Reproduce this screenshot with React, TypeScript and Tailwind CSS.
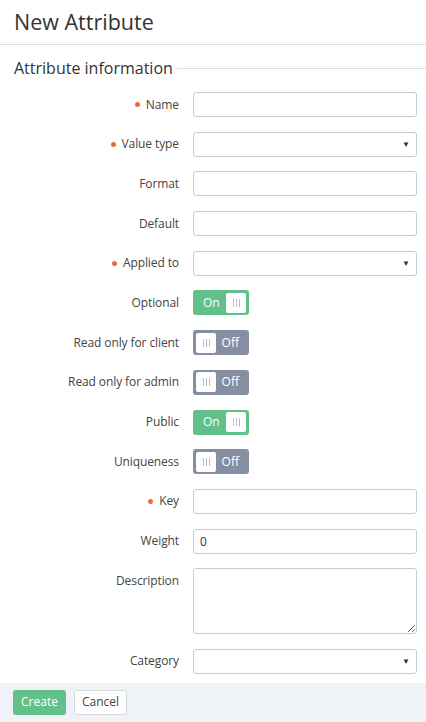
import type { ReactNode } from 'react';

const Dot = () => <span className="mr-[6px] inline-block h-[5px] w-[5px] rounded-full bg-[#f2683a]" />;

const Field = ({ label, required, children, top }: { label: string; required?: boolean; children: ReactNode; top?: boolean }) => (
  <div className={`flex ${top ? 'items-start' : 'items-center'}`}>
    <label className={`flex w-[179px] shrink-0 items-center justify-end text-[12px] tracking-[-0.1px] text-[#444] ${top ? 'pt-[4px]' : ''}`}>
      {required && <Dot />}
      {label}
    </label>
    <div className="ml-[14px] flex-1">{children}</div>
  </div>
);

const Input = ({ value }: { value?: string }) => (
  <input
    readOnly
    value={value ?? ''}
    className="block h-[25px] w-full rounded-[3px] border border-[#c5cad3] bg-white px-[6px] text-[12px] text-[#333] outline-none"
  />
);

const Select = () => (
  <div className="relative h-[25px] w-full rounded-[3px] border border-[#c5cad3] bg-white">
    <span className="absolute right-[6px] top-[7px] text-[8px] leading-none text-[#333]">▼</span>
  </div>
);

const Knob = () => (
  <span className="flex h-[20px] w-[20px] items-center justify-center gap-[2px] rounded-[2px] bg-white">
    <span className="h-[8px] w-px bg-[#b9bec8]" />
    <span className="h-[8px] w-px bg-[#b9bec8]" />
    <span className="h-[8px] w-px bg-[#b9bec8]" />
  </span>
);

const Toggle = ({ on }: { on?: boolean }) =>
  on ? (
    <div className="flex h-[25px] w-[56px] items-center justify-between rounded-[3px] bg-[#62c08b] pl-[10px] pr-[3px] text-[12px] text-white">
      <span>On</span>
      <Knob />
    </div>
  ) : (
    <div className="flex h-[25px] w-[56px] items-center justify-between rounded-[3px] bg-[#858fa1] pl-[3px] pr-[10px] text-[12px] text-white">
      <Knob />
      <span>Off</span>
    </div>
  );

export default function App() {
  return (
    <div className="flex min-h-[722px] w-[426px] flex-col bg-white" style={{ fontFamily: '"Open Sans", sans-serif' }}>
      <h1 className="h-[45px] border-b border-[#d9dee6] px-[14px] pt-[8px] text-[21.5px] leading-[28px] text-[#333]">New Attribute</h1>

      <div className="flex items-center pl-[14px] pt-[12px]">
        <span className="text-[16px] leading-[22px] text-[#333]">Attribute information</span>
        <span className="ml-[4px] h-px flex-1 bg-[#d9dee6]" />
      </div>

      <div className="flex flex-col gap-y-[14.7px] pr-[9px] pt-[13px]">
        <Field label="Name" required><Input /></Field>
        <Field label="Value type" required><Select /></Field>
        <Field label="Format"><Input /></Field>
        <Field label="Default"><Input /></Field>
        <Field label="Applied to" required><Select /></Field>
        <Field label="Optional"><Toggle on /></Field>
        <Field label="Read only for client"><Toggle /></Field>
        <Field label="Read only for admin"><Toggle /></Field>
        <Field label="Public"><Toggle on /></Field>
        <Field label="Uniqueness"><Toggle /></Field>
        <Field label="Key" required><Input /></Field>
        <Field label="Weight"><Input value="0" /></Field>
        <Field label="Description" top>
          <textarea readOnly className="block h-[66px] w-full rounded-[3px] border border-[#c5cad3] bg-white outline-none" />
        </Field>
        <Field label="Category"><Select /></Field>
      </div>

      <div className="mt-[9px] flex flex-1 items-start gap-[8px] bg-[#eff2f6] px-[13px] pt-[7px]">
        <button className="h-[25px] w-[53px] rounded-[3px] bg-[#62c08b] text-[12px] text-white">Create</button>
        <button className="h-[25px] w-[53px] rounded-[3px] border border-[#d4d8df] bg-white text-[12px] text-[#444]">Cancel</button>
      </div>
    </div>
  );
}
